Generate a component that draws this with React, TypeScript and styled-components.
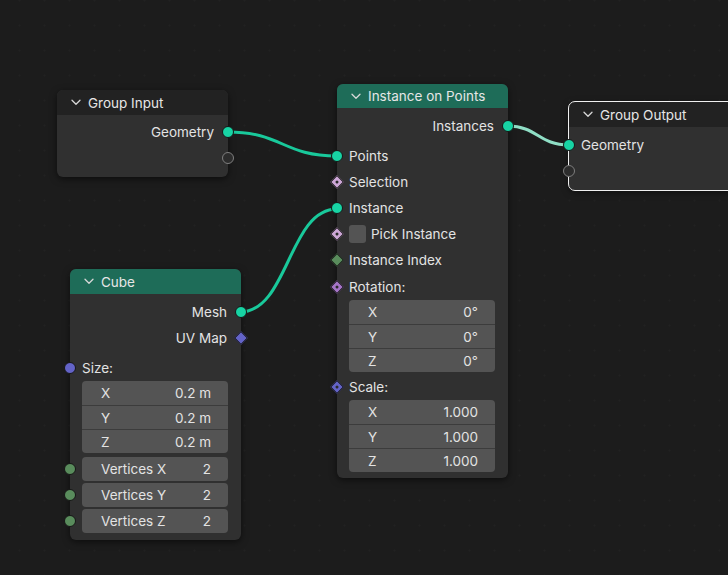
import React from "react";
import styled, { createGlobalStyle, css } from "styled-components";

const GlobalStyle = createGlobalStyle`
  html, body { margin: 0; padding: 0; background: #1c1c1c; }
  body { font-family: Inter, "Noto Sans", "DejaVu Sans", sans-serif; }
`;

type SocketKind = "geometry" | "bool" | "int" | "rotation" | "vector" | "empty";
type Shape = "circle" | "diamond" | "hollow";

const socketColors: Record<SocketKind, string> = {
  geometry: "#17d4a4",
  bool: "#cca6d6",
  int: "#598c5c",
  rotation: "#a574c7",
  vector: "#6363c7",
  empty: "transparent",
};

const Canvas = styled.div`
  position: relative;
  width: 728px;
  height: 575px;
  overflow: hidden;
  background-color: #1c1c1c;
  background-image: radial-gradient(circle, #212121 0.7px, transparent 1.3px);
  background-size: 25px 25px;
  background-position: 7px 13px;
`;

const Links = styled.svg`
  position: absolute;
  inset: 0;
  width: 728px;
  height: 575px;
`;

const NodeFrame = styled.div<{ $x: number; $y: number; $selected?: boolean }>`
  position: absolute;
  left: ${(p) => p.$x}px;
  top: ${(p) => p.$y}px;
  width: 171px;
  border-radius: 6px;
  background: #303030;
  box-shadow: 0 2px 7px rgba(0, 0, 0, 0.55);
  color: #e3e3e3;
  font-size: 13.5px;
  ${(p) =>
    p.$selected &&
    css`
      outline: 1px solid #f0f0f0;
    `}
`;

const Header = styled.div<{ $accent?: boolean; $h?: number }>`
  height: ${(p) => p.$h ?? 25}px;
  display: flex;
  align-items: center;
  gap: 7px;
  padding-left: 14px;
  border-radius: 6px 6px 0 0;
  background: ${(p) => (p.$accent ? "#1e6c58" : "#222222")};
  color: #e6e6e6;
`;

const Chevron = () => (
  <svg width="10" height="7" viewBox="0 0 10 7">
    <path d="M1 1.2 L5 5.2 L9 1.2" fill="none" stroke="#d8d8d8" strokeWidth="1.3" strokeLinecap="round" strokeLinejoin="round" />
  </svg>
);

const Body = styled.div<{ $top: number; $bottom: number }>`
  display: flex;
  flex-direction: column;
  padding: ${(p) => p.$top}px 0 ${(p) => p.$bottom}px;
`;

const Row = styled.div<{ $side?: "left" | "right"; $gap?: number }>`
  position: relative;
  height: 26px;
  margin-top: ${(p) => p.$gap ?? 0}px;
  display: flex;
  align-items: center;
  justify-content: ${(p) => (p.$side === "right" ? "flex-end" : "flex-start")};
  padding: 0 14px 0 12px;
  gap: 5px;
  flex-shrink: 0;
`;

const Socket = styled.span<{ $kind: SocketKind; $side: "left" | "right"; $shape?: Shape; $field?: boolean }>`
  position: absolute;
  top: 50%;
  ${(p) => (p.$side === "left" ? "left: 0;" : "right: 0;")}
  box-sizing: border-box;
  ${(p) => {
    const shift = p.$side === "left" ? "-50%" : "50%";
    const shape = p.$shape ?? "circle";
    if (shape === "hollow")
      return css`
        width: 12px;
        height: 12px;
        border-radius: 50%;
        border: 1.5px solid #7e7e7e;
        background: #2c2c2c;
        transform: translate(${shift}, -50%);
      `;
    if (shape === "circle")
      return css`
        width: 12px;
        height: 12px;
        border-radius: 50%;
        border: 1px solid #161616;
        background: ${socketColors[p.$kind]};
        transform: translate(${shift}, -50%);
      `;
    return css`
      width: 10px;
      height: 10px;
      border: 1px solid #161616;
      background: ${socketColors[p.$kind]};
      transform: translate(${shift}, -50%) rotate(45deg);
    `;
  }}
  ${(p) =>
    p.$field &&
    css`
      &::after {
        content: "";
        position: absolute;
        left: 50%;
        top: 50%;
        width: 3px;
        height: 3px;
        border-radius: 50%;
        background: #2a2a2a;
        transform: translate(-50%, -50%);
      }
    `}
`;

const Checkbox = styled.span`
  width: 17px;
  height: 18px;
  border-radius: 3px;
  background: #545454;
  flex-shrink: 0;
`;

const VectorBox = styled.div`
  margin: 0 13px 0 12px;
  border-radius: 4px;
  overflow: hidden;
  background: #545454;
  display: flex;
  flex-direction: column;
  flex-shrink: 0;
`;

const FieldRow = styled.div`
  height: 24px;
  box-sizing: border-box;
  display: flex;
  align-items: center;
  justify-content: space-between;
  padding: 0 17px 0 19px;
  & + & {
    border-top: 1px solid #3c3c3c;
  }
`;

const FieldBox = styled.div`
  flex: 1;
  height: 24px;
  display: flex;
  align-items: center;
  justify-content: space-between;
  padding: 0 17px 0 19px;
  margin-right: -1px;
  border-radius: 4px;
  background: #545454;
`;

const link = (x1: number, y1: number, x2: number, y2: number) => {
  const h = Math.max(Math.abs(x2 - x1) * 0.5, 20);
  return `M ${x1} ${y1} C ${x1 + h} ${y1}, ${x2 - h} ${y2}, ${x2} ${y2}`;
};

export default function App() {
  return (
    <Canvas>
      <GlobalStyle />
      <Links viewBox="0 0 728 575">
        <path d={link(228, 132, 337, 156)} stroke="#19c99b" strokeWidth="3" fill="none" strokeLinecap="round" />
        <path d={link(240, 312, 337, 209)} stroke="#19c99b" strokeWidth="3" fill="none" strokeLinecap="round" />
        <path d={link(507, 126, 569, 145)} stroke="#90dfc6" strokeWidth="3" fill="none" strokeLinecap="round" />
      </Links>

      <NodeFrame $x={57} $y={90}>
        <Header>
          <Chevron />
          Group Input
        </Header>
        <Body $top={4} $bottom={6}>
          <Row $side="right">
            Geometry
            <Socket $kind="geometry" $side="right" />
          </Row>
          <Row $side="right">
            <Socket $kind="empty" $shape="hollow" $side="right" />
          </Row>
        </Body>
      </NodeFrame>

      <NodeFrame $x={337} $y={84}>
        <Header $accent $h={24}>
          <Chevron />
          Instance on Points
        </Header>
        <Body $top={5} $bottom={6}>
          <Row $side="right">
            Instances
            <Socket $kind="geometry" $side="right" />
          </Row>
          <Row $gap={4}>
            <Socket $kind="geometry" $side="left" />
            Points
          </Row>
          <Row>
            <Socket $kind="bool" $shape="diamond" $side="left" $field />
            Selection
          </Row>
          <Row>
            <Socket $kind="geometry" $side="left" />
            Instance
          </Row>
          <Row>
            <Socket $kind="bool" $shape="diamond" $side="left" $field />
            <Checkbox />
            Pick Instance
          </Row>
          <Row>
            <Socket $kind="int" $shape="diamond" $side="left" />
            Instance Index
          </Row>
          <Row $gap={1}>
            <Socket $kind="rotation" $shape="diamond" $side="left" $field />
            Rotation:
          </Row>
          <VectorBox>
            <FieldRow><span>X</span><span>0°</span></FieldRow>
            <FieldRow><span>Y</span><span>0°</span></FieldRow>
            <FieldRow><span>Z</span><span>0°</span></FieldRow>
          </VectorBox>
          <Row $gap={2}>
            <Socket $kind="vector" $shape="diamond" $side="left" $field />
            Scale:
          </Row>
          <VectorBox>
            <FieldRow><span>X</span><span>1.000</span></FieldRow>
            <FieldRow><span>Y</span><span>1.000</span></FieldRow>
            <FieldRow><span>Z</span><span>1.000</span></FieldRow>
          </VectorBox>
        </Body>
      </NodeFrame>

      <NodeFrame $x={569} $y={102} $selected>
        <Header>
          <Chevron />
          Group Output
        </Header>
        <Body $top={5} $bottom={6}>
          <Row>
            <Socket $kind="geometry" $side="left" />
            Geometry
          </Row>
          <Row>
            <Socket $kind="empty" $shape="hollow" $side="left" />
          </Row>
        </Body>
      </NodeFrame>

      <NodeFrame $x={70} $y={269}>
        <Header $accent>
          <Chevron />
          Cube
        </Header>
        <Body $top={5} $bottom={6}>
          <Row $side="right">
            Mesh
            <Socket $kind="geometry" $side="right" />
          </Row>
          <Row $side="right">
            UV Map
            <Socket $kind="vector" $shape="diamond" $side="right" />
          </Row>
          <Row $gap={4}>
            <Socket $kind="vector" $side="left" />
            Size:
          </Row>
          <VectorBox>
            <FieldRow><span>X</span><span>0.2 m</span></FieldRow>
            <FieldRow><span>Y</span><span>0.2 m</span></FieldRow>
            <FieldRow><span>Z</span><span>0.2 m</span></FieldRow>
          </VectorBox>
          <Row $gap={3}>
            <Socket $kind="int" $side="left" />
            <FieldBox><span>Vertices X</span><span>2</span></FieldBox>
          </Row>
          <Row>
            <Socket $kind="int" $side="left" />
            <FieldBox><span>Vertices Y</span><span>2</span></FieldBox>
          </Row>
          <Row>
            <Socket $kind="int" $side="left" />
            <FieldBox><span>Vertices Z</span><span>2</span></FieldBox>
          </Row>
        </Body>
      </NodeFrame>
    </Canvas>
  );
}
